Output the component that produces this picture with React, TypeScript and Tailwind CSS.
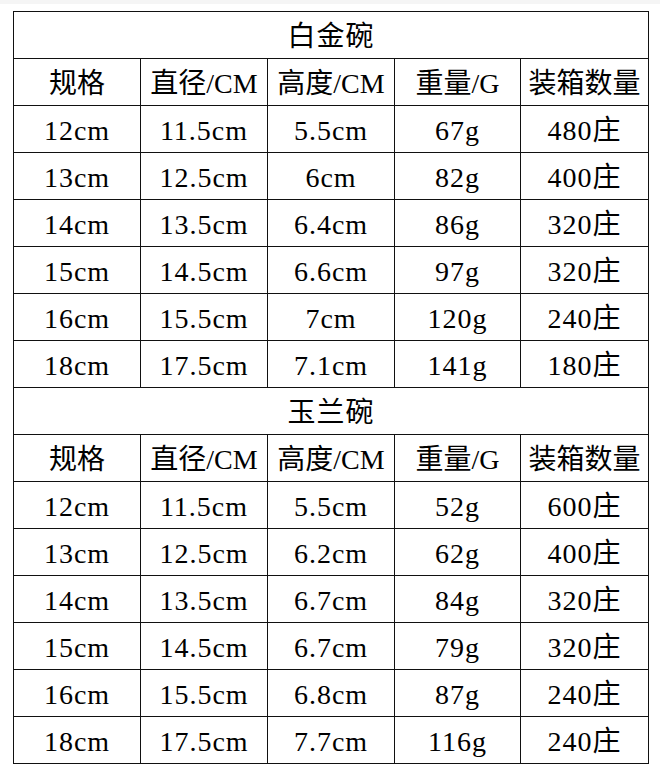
const headers = ['规格', '直径/CM', '高度/CM', '重量/G', '装箱数量']

const sections = [
  {
    title: '白金碗',
    rows: [
      ['12cm', '11.5cm', '5.5cm', '67g', '480庄'],
      ['13cm', '12.5cm', '6cm', '82g', '400庄'],
      ['14cm', '13.5cm', '6.4cm', '86g', '320庄'],
      ['15cm', '14.5cm', '6.6cm', '97g', '320庄'],
      ['16cm', '15.5cm', '7cm', '120g', '240庄'],
      ['18cm', '17.5cm', '7.1cm', '141g', '180庄'],
    ],
  },
  {
    title: '玉兰碗',
    rows: [
      ['12cm', '11.5cm', '5.5cm', '52g', '600庄'],
      ['13cm', '12.5cm', '6.2cm', '62g', '400庄'],
      ['14cm', '13.5cm', '6.7cm', '84g', '320庄'],
      ['15cm', '14.5cm', '6.7cm', '79g', '320庄'],
      ['16cm', '15.5cm', '6.8cm', '87g', '240庄'],
      ['18cm', '17.5cm', '7.7cm', '116g', '240庄'],
    ],
  },
]

const cell = 'h-[47px] border border-[#111] p-0 pt-[3px] text-center align-middle leading-none'

export default function App() {
  return (
    <div
      className="min-h-[775px] w-[660px] bg-white text-[28px] tracking-[1px] text-black"
      style={{ fontFamily: '"Liberation Serif", "Noto Sans CJK SC", serif' }}
    >
      <div className="h-[4px] bg-[#f5f5f5]" />
      <table className="ml-[13px] mt-[7px] w-[635px] table-fixed border-collapse">
        <colgroup>
          <col className="w-[127px]" />
          <col className="w-[127px]" />
          <col className="w-[127px]" />
          <col className="w-[126px]" />
          <col className="w-[128px]" />
        </colgroup>
        <tbody>
          {sections.map((s) => (
            <>
              <tr key={s.title}>
                <td colSpan={5} className={cell}>
                  {s.title}
                </td>
              </tr>
              <tr key={s.title + '-h'}>
                {headers.map((h) => (
                  <td key={h} className={`${cell} whitespace-nowrap tracking-normal`}>
                    {h}
                  </td>
                ))}
              </tr>
              {s.rows.map((r, i) => (
                <tr key={s.title + i}>
                  {r.map((v, j) => (
                    <td key={j} className={cell}>
                      {v}
                    </td>
                  ))}
                </tr>
              ))}
            </>
          ))}
        </tbody>
      </table>
    </div>
  )
}
